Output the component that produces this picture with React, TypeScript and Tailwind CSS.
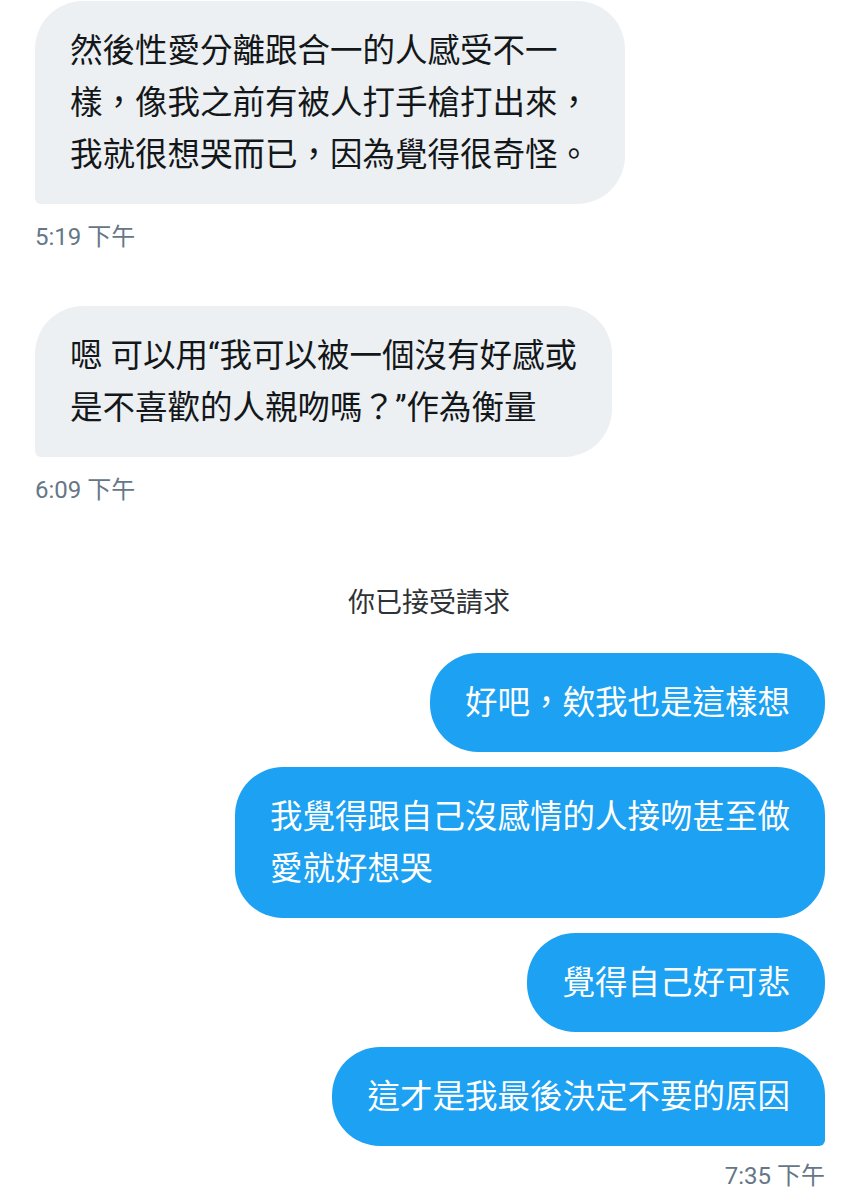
import React from "react";

const FONT = {
  fontFamily:
    'Roboto, "Noto Sans CJK TC", "Noto Sans CJK SC", sans-serif',
};

function Received({ lines }: { lines: string[] }) {
  return (
    <div className="w-fit self-start rounded-[48px] rounded-bl-[6px] bg-[#ecf0f2] px-[35px] py-[23.5px] text-[32.5px] leading-[52px] text-[#14171a] whitespace-nowrap">
      {lines.map((l, i) => (
        <div key={i}>{l}</div>
      ))}
    </div>
  );
}

function Sent({ lines, last }: { lines: string[]; last?: boolean }) {
  return (
    <div
      className={
        last
          ? "w-fit self-end rounded-[48px] rounded-br-[6px] bg-[#1da1f2] px-[35px] py-[23.5px] text-[32.5px] leading-[52px] text-white whitespace-nowrap"
          : "w-fit self-end rounded-[48px] bg-[#1da1f2] px-[35px] py-[23.5px] text-[32.5px] leading-[52px] text-white whitespace-nowrap"
      }
    >
      {lines.map((l, i) => (
        <div key={i}>{l}</div>
      ))}
    </div>
  );
}

export default function App() {
  return (
    <div
      className="w-[858px] h-[1200px] overflow-hidden bg-white flex flex-col pl-[35px] pr-[33px]"
      style={FONT}
    >
      <div className="mt-[1px] flex flex-col">
        <Received
          lines={[
            "然後性愛分離跟合一的人感受不一",
            "樣，像我之前有被人打手槍打出來，",
            "我就很想哭而已，因為覺得很奇怪。",
          ]}
        />
      </div>
      <div className="mt-[18px] text-[24px] leading-[30px] text-[#657786]">
        5:19 下午
      </div>

      <div className="mt-[54px] flex flex-col">
        <Received
          lines={["嗯 可以用“我可以被一個沒有好感或", "是不喜歡的人親吻嗎？”作為衡量"]}
        />
      </div>
      <div className="mt-[18px] text-[24px] leading-[30px] text-[#657786]">
        6:09 下午
      </div>

      <div className="mt-[80px] text-center text-[27px] leading-[36px] text-[#2f3336] pr-[2px]">
        你已接受請求
      </div>

      <div className="mt-[32px] flex flex-col gap-[15px]">
        <Sent lines={["好吧，欸我也是這樣想"]} />
        <Sent lines={["我覺得跟自己沒感情的人接吻甚至做", "愛就好想哭"]} />
        <Sent lines={["覺得自己好可悲"]} />
        <Sent lines={["這才是我最後決定不要的原因"]} last />
      </div>
      <div className="mt-[15px] self-end text-[24px] leading-[30px] text-[#657786]">
        7:35 下午
      </div>
    </div>
  );
}
